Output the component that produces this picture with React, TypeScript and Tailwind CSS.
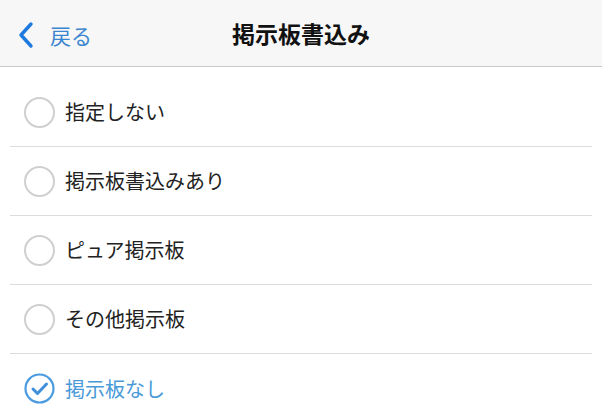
import { useState } from 'react';

const options = ['指定しない', '掲示板書込みあり', 'ピュア掲示板', 'その他掲示板', '掲示板なし'];

const font = "font-['Noto_Sans_CJK_JP','Noto_Sans',sans-serif]";

const App = () => {
  const [selected, setSelected] = useState(4);

  return (
    <div className={`h-[419px] w-[602px] overflow-hidden bg-white ${font}`}>
      {/* nav bar */}
      <div className="relative flex h-[67px] items-center justify-center border-b border-[#c9c9c9] bg-[#f7f7f7]">
        <button className="absolute left-[16px] top-[21px] flex items-center gap-[14px] text-[#3b86cf]">
          <svg width="20" height="28" viewBox="0 0 20 28" fill="none">
            <path d="M15 3 L5 14 L15 25" stroke="#1f7ae0" strokeWidth="3.4" strokeLinecap="round" strokeLinejoin="round" />
          </svg>
          <span className="text-[21px] leading-none">戻る</span>
        </button>
        <h1 className="text-[23px] font-bold leading-none text-[#111]">掲示板書込み</h1>
      </div>

      {/* options */}
      <ul className="pt-[11px]">
        {options.map((label, i) => {
          const on = i === selected;
          return (
            <li
              key={label}
              onClick={() => setSelected(i)}
              className={`mx-[10px] flex h-[69px] cursor-pointer items-center gap-[10px] pl-[14px] ${
                i < options.length - 1 ? 'border-b border-[#dcdcdc]' : ''
              }`}
            >
              {on ? (
                <svg width="31" height="31" viewBox="0 0 31 31" fill="none">
                  <circle cx="15.5" cy="15.5" r="14" stroke="#4b9be0" strokeWidth="2.2" />
                  <path d="M9 16 L13.5 20.5 L22.5 11" stroke="#3f8fdc" strokeWidth="3" strokeLinecap="round" strokeLinejoin="round" />
                </svg>
              ) : (
                <span className="h-[31px] w-[31px] rounded-full border-2 border-[#cfcfcf] bg-white" />
              )}
              <span className={`text-[20px] leading-none ${on ? 'text-[#4a9ad8]' : 'text-[#222]'}`}>{label}</span>
            </li>
          );
        })}
      </ul>
    </div>
  );
};

export default App;
